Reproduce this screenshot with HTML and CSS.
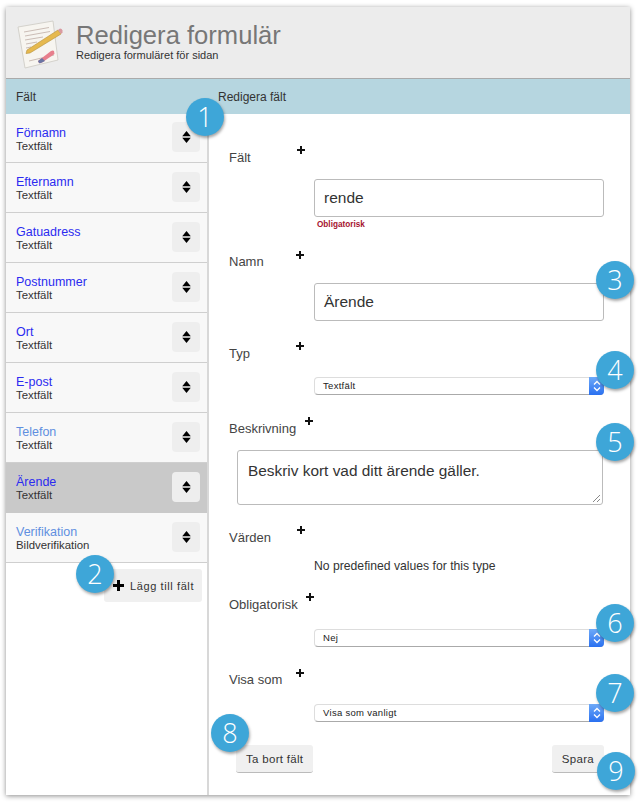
FILE: index.html
```html
<!DOCTYPE html>
<html lang="en">
<head>
    <meta charset="UTF-8">
    <title>Redigera formulär</title>
    <link rel="stylesheet" href="styles.css">
</head>
<body>
    <div class="panel">
        <div class="header">
            <svg class="logo" width="46" height="50" viewBox="0 0 46 50">
                <path d="M1 7 L36 1 L41 40 L8 48 Z" fill="#f7f5f0" stroke="#d4d2cc" stroke-width="1"/>
                <path d="M7 12 L32 7.500 M8 16 L33 11.500 M8 20 L26 17 M9 24 L20 22 M9 28 L14 27 M12 41 L37 35" stroke="#cbbdb6" stroke-width="1"/>
                <path d="M10 30 L41 10 L44 14 L13 33 L9 33.500 Z" fill="#e6b94e" stroke="#b5913a" stroke-width=".6"/>
                <path d="M41 10 L43 8.500 Q45 8.500 45.500 10.500 L45.500 12.500 L44 14 Z" fill="#d99aa0"/>
                <path d="M21 41 L34 31 Q36 30 37 31 L37.500 34 L25 42.500 Q23 43.500 22 43 Z" fill="#e77f8c"/>
                <path d="M21 41 L25 38 L28 41 L25 42.500 Q23 43.500 22 43 Z" fill="#6a75a3"/>
            </svg>
            <div>
                <h1>Redigera formulär</h1>
                <p class="subtitle">Redigera formuläret för sidan</p>
            </div>
        </div>
        <div class="bar">
            <div class="bar-left">Fält</div>
            <div>Redigera fält</div>
        </div>
        <div class="main">
            <div class="sidebar">
                <div class="row"><div class="row-text"><a class="link">Förnamn</a><span>Textfält</span></div><div class="sort"><svg width="9" height="12" viewBox="0 0 10 14"><path d="M5 0 L10 6 H0 Z M0 8 H10 L5 14 Z"/></svg></div></div>
                <div class="row"><div class="row-text"><a class="link">Efternamn</a><span>Textfält</span></div><div class="sort"><svg width="9" height="12" viewBox="0 0 10 14"><path d="M5 0 L10 6 H0 Z M0 8 H10 L5 14 Z"/></svg></div></div>
                <div class="row"><div class="row-text"><a class="link">Gatuadress</a><span>Textfält</span></div><div class="sort"><svg width="9" height="12" viewBox="0 0 10 14"><path d="M5 0 L10 6 H0 Z M0 8 H10 L5 14 Z"/></svg></div></div>
                <div class="row"><div class="row-text"><a class="link">Postnummer</a><span>Textfält</span></div><div class="sort"><svg width="9" height="12" viewBox="0 0 10 14"><path d="M5 0 L10 6 H0 Z M0 8 H10 L5 14 Z"/></svg></div></div>
                <div class="row"><div class="row-text"><a class="link">Ort</a><span>Textfält</span></div><div class="sort"><svg width="9" height="12" viewBox="0 0 10 14"><path d="M5 0 L10 6 H0 Z M0 8 H10 L5 14 Z"/></svg></div></div>
                <div class="row"><div class="row-text"><a class="link">E-post</a><span>Textfält</span></div><div class="sort"><svg width="9" height="12" viewBox="0 0 10 14"><path d="M5 0 L10 6 H0 Z M0 8 H10 L5 14 Z"/></svg></div></div>
                <div class="row"><div class="row-text"><a class="link visited">Telefon</a><span>Textfält</span></div><div class="sort"><svg width="9" height="12" viewBox="0 0 10 14"><path d="M5 0 L10 6 H0 Z M0 8 H10 L5 14 Z"/></svg></div></div>
                <div class="row selected"><div class="row-text"><a class="link">Ärende</a><span>Textfält</span></div><div class="sort"><svg width="9" height="12" viewBox="0 0 10 14"><path d="M5 0 L10 6 H0 Z M0 8 H10 L5 14 Z"/></svg></div></div>
                <div class="row"><div class="row-text"><a class="link visited">Verifikation</a><span>Bildverifikation</span></div><div class="sort"><svg width="9" height="12" viewBox="0 0 10 14"><path d="M5 0 L10 6 H0 Z M0 8 H10 L5 14 Z"/></svg></div></div>
                <div class="add-wrap">
                    <button class="add-btn"><svg width="11" height="11" viewBox="0 0 11 11"><path d="M4 0 H7 V4 H11 V7 H7 V11 H4 V7 H0 V4 H4 Z"/></svg>Lägg till fält</button>
                </div>
            </div>
            <div class="form">
                <div class="label-row lr-falt"><label>Fält</label><b class="plus plus-falt"></b></div>
                <div class="control"><div class="input">rende</div><div class="error">Obligatorisk</div></div>

                <div class="label-row lr-namn"><label>Namn</label><b class="plus plus-namn"></b></div>
                <div class="control"><div class="input">Ärende</div></div>

                <div class="label-row lr-typ"><label>Typ</label><b class="plus plus-typ"></b></div>
                <div class="control ctl-typ"><div class="select">Textfält<i class="arrows"><svg width="8" height="12" viewBox="0 0 8 12"><path d="M1 4.500 L4 1.500 L7 4.500 M1 7.500 L4 10.500 L7 7.500" fill="none" stroke="#fff" stroke-width="1.300"/></svg></i></div></div>

                <div class="label-row lr-besk"><label>Beskrivning</label><b class="plus plus-besk"></b></div>
                <div class="textarea">Beskriv kort vad ditt ärende gäller.<svg class="grip" width="9" height="9" viewBox="0 0 9 9"><path d="M1 8 L8 1 M5 8 L8 5" stroke="#888" stroke-width="1"/></svg></div>

                <div class="label-row lr-vard"><label>Värden</label><b class="plus plus-vard"></b></div>
                <div class="control"><p class="none">No predefined values for this type</p></div>

                <div class="label-row lr-oblig"><label>Obligatorisk</label><b class="plus plus-oblig"></b></div>
                <div class="control ctl-select"><div class="select">Nej<i class="arrows"><svg width="8" height="12" viewBox="0 0 8 12"><path d="M1 4.500 L4 1.500 L7 4.500 M1 7.500 L4 10.500 L7 7.500" fill="none" stroke="#fff" stroke-width="1.300"/></svg></i></div></div>

                <div class="label-row lr-visa"><label>Visa som</label><b class="plus plus-visa"></b></div>
                <div class="control ctl-select"><div class="select">Visa som vanligt<i class="arrows"><svg width="8" height="12" viewBox="0 0 8 12"><path d="M1 4.500 L4 1.500 L7 4.500 M1 7.500 L4 10.500 L7 7.500" fill="none" stroke="#fff" stroke-width="1.300"/></svg></i></div></div>

                <div class="actions">
                    <button class="btn">Ta bort fält</button>
                    <button class="btn">Spara</button>
                </div>
            </div>
        </div>
    </div>

    <div class="badge b1">1</div>
    <div class="badge b2">2</div>
    <div class="badge b3">3</div>
    <div class="badge b4">4</div>
    <div class="badge b5">5</div>
    <div class="badge b6">6</div>
    <div class="badge b7">7</div>
    <div class="badge b8">8</div>
    <div class="badge b9">9</div>
</body>
</html>
```
FILE: styles.css
```css
body {
    margin: 0;
    background: #fff;
    font-family: "Liberation Sans", Arial, sans-serif;
    color: #222;
    height: 809px;
    overflow: hidden;
}

.panel {
    width: 624px;
    margin: 7px 0 0 6px;
    box-shadow: 0 1px 5px rgba(0, 0, 0, 0.45);
    background: #fff;
}

.header {
    height: 71px;
    display: flex;
    align-items: center;
    background: #ececec;
    border-bottom: 1px solid #aaa;
    padding-left: 11px;
}

.logo {
    margin: 4px 13px 0 0;
}

h1 {
    margin: 0;
    font-size: 25.600px;
    font-weight: normal;
    line-height: 30px;
    color: #777;
}

.subtitle {
    margin: -1px 0 5px;
    font-size: 11px;
    line-height: 12px;
    color: #333;
}

.bar {
    height: 35px;
    display: flex;
    align-items: center;
    background: #b6d6e0;
    font-size: 12px;
    color: #333;
}

.bar-left {
    width: 212px;
    padding-left: 10px;
    box-sizing: border-box;
}

.main {
    display: flex;
    height: 681px;
}

.sidebar {
    width: 201px;
    background: #fff;
    border-right: 2px solid #d8d8d8;
}

.row {
    height: 49px;
    display: flex;
    justify-content: space-between;
    align-items: center;
    padding: 0 7px 0 10px;
    background: #f8f8f8;
    border-bottom: 1px solid #cfcfcf;
}

.row:first-child {
    height: 48px;
}

.row.selected {
    background: #c9c9c9;
    border-bottom-color: #c9c9c9;
}

.row-text {
    padding-top: 2px;
}

.link {
    display: block;
    font-size: 12.500px;
    line-height: 14px;
    color: #2b2bf0;
}

.link.visited {
    color: #5f8fe0;
}

.row span {
    display: block;
    font-size: 11.400px;
    line-height: 13px;
    color: #333;
}

.sort {
    width: 28px;
    height: 30px;
    display: flex;
    align-items: center;
    justify-content: center;
    background: #eee;
    border-radius: 4px;
    margin-bottom: 2px;
}

.add-wrap {
    display: flex;
    justify-content: flex-end;
    padding: 6px 5px 0 0;
}

.add-btn {
    display: flex;
    align-items: center;
    gap: 6px;
    width: 98px;
    height: 33px;
    padding: 0 0 0 9px;
    border: none;
    border-radius: 3px;
    background: #f0f0f0;
    font-family: inherit;
    font-size: 11px;
    letter-spacing: 0.6px;
    color: #333;
    white-space: nowrap;
}

.form {
    flex: 1;
    padding-left: 20px;
    font-size: 12px;
}

.label-row {
    display: flex;
    height: 14px;
}

.label-row label {
    font-size: 13px;
    line-height: 14px;
    color: #444;
}

.lr-falt { margin-top: 37px; }
.lr-namn { margin-top: 26px; }
.lr-typ { margin-top: 26px; }
.lr-besk { margin-top: 27px; }
.lr-vard { margin-top: 26px; }
.lr-oblig { margin-top: 25px; }
.lr-visa { margin-top: 26px; }

.plus {
    position: relative;
    display: block;
    width: 8px;
    height: 8px;
    margin-top: -5px;
}

.plus::before,
.plus::after {
    content: "";
    position: absolute;
    background: #111;
}

.plus::before {
    left: 0;
    top: 3px;
    width: 8px;
    height: 2px;
}

.plus::after {
    left: 3px;
    top: 0;
    width: 2px;
    height: 8px;
}

.plus-falt { margin-left: 46px; }
.plus-namn { margin-left: 32px; margin-top: -4px; }
.plus-typ { margin-left: 46px; }
.plus-besk { margin-left: 9px; }
.plus-vard { margin-left: 26px; }
.plus-oblig { margin-left: 8px; }
.plus-visa { margin-left: 14px; margin-top: -4px; }

.control {
    margin-left: 85px;
    width: 290px;
    margin-top: 14px;
}

.input {
    height: 38px;
    box-sizing: border-box;
    border: 1px solid #bbb;
    border-radius: 3px;
    padding: 0 9px;
    font-size: 15.500px;
    line-height: 36px;
    color: #333;
}

.error {
    margin: 3px 0 0 3px;
    font-size: 8.200px;
    line-height: 9px;
    font-weight: bold;
    color: #a5122f;
}

.ctl-typ {
    margin-top: 16px;
}

.ctl-select {
    margin-top: 17px;
}

.select {
    position: relative;
    height: 18px;
    box-sizing: border-box;
    padding-left: 8px;
    border-radius: 4px;
    border: 1px solid #ddd;
    border-bottom-color: #aaa;
    font-size: 9.500px;
    letter-spacing: 0.3px;
    line-height: 16px;
    color: #222;
}

.arrows {
    position: absolute;
    right: -1px;
    top: -1px;
    width: 15px;
    height: 18px;
    display: flex;
    align-items: center;
    justify-content: center;
    border-radius: 0 4px 4px 0;
    background: linear-gradient(#6eaaf8, #2a70f0);
}

.textarea {
    position: relative;
    margin: 14px 0 0 8px;
    width: 366px;
    height: 55px;
    box-sizing: border-box;
    border: 1px solid #bbb;
    border-radius: 3px;
    padding: 11px 10px;
    font-size: 15.400px;
    line-height: 18px;
    color: #333;
}

.grip {
    position: absolute;
    right: 1px;
    bottom: 1px;
}

.none {
    margin: 0;
    font-size: 12.200px;
    line-height: 14px;
    color: #333;
}

.actions {
    display: flex;
    justify-content: space-between;
    width: 368px;
    margin: 23px 0 0 7px;
}

.btn {
    height: 28px;
    padding: 0 10px;
    border: none;
    border-bottom: 1px solid #bbb;
    border-radius: 3px;
    background: #f0f0f0;
    font-family: inherit;
    font-size: 11.500px;
    letter-spacing: 0.3px;
    color: #333;
}

.badge {
    position: absolute;
    width: 38px;
    height: 38px;
    border-radius: 50%;
    background: #3ea6d8;
    box-shadow: 1px 2px 3px rgba(0, 0, 0, 0.35);
    color: #fff;
    font-family: "Open Sans", sans-serif;
    font-weight: 300;
    font-size: 27px;
    line-height: 38px;
    text-align: center;
}

.b1 { left: 186px; top: 98px; }
.b2 { left: 76px; top: 555px; }
.b3 { left: 596px; top: 261px; }
.b4 { left: 596px; top: 351px; }
.b5 { left: 596px; top: 423px; }
.b6 { left: 596px; top: 604px; }
.b7 { left: 596px; top: 674px; }
.b8 { left: 211px; top: 714px; }
.b9 { left: 597px; top: 752px; }
```
